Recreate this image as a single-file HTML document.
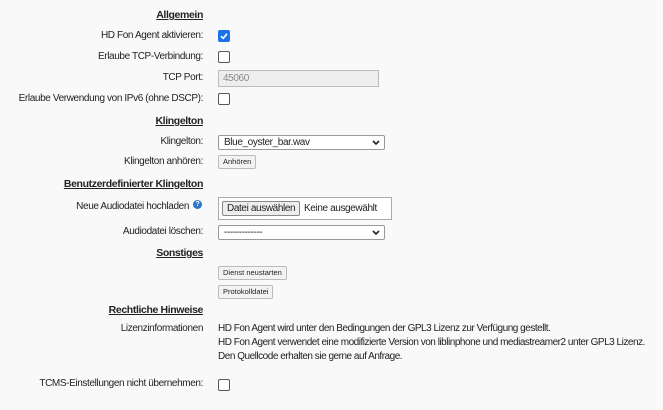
<!DOCTYPE html>
<html><head><meta charset="utf-8"><style>
body{margin:0;width:663px;height:410px;background:#f9f9f9;font-family:"Liberation Sans",sans-serif;font-size:10px;letter-spacing:-0.38px;color:#222;position:relative;overflow:hidden}
.l{position:absolute;right:460px;white-space:nowrap;line-height:12px}
.h{font-weight:bold;text-decoration:underline;font-size:10.5px}
.a{position:absolute;left:218px}
.cb{width:10px;height:10px;border:1px solid #555;border-radius:2px;background:#fff}
.cbon{background:#1a73e8;border-color:#1a73e8}
.inp{border:1px solid #bbb;background:#eee;color:#888;height:17px;line-height:15px;padding-left:4px;box-sizing:border-box}
.sel{border:1px solid #999;background:#fff;height:15px;line-height:13px;padding-left:5px;box-sizing:border-box;border-radius:2px}
.btn{border:1px solid #bbb;border-radius:2px;background:#f3f3f3;font-size:7.5px;letter-spacing:0;height:14px;line-height:12px;padding:0 4px;box-sizing:border-box}
.t{position:absolute;left:218px;line-height:14px;white-space:nowrap;letter-spacing:-0.48px}
.ch{position:absolute;right:4px;top:4px}
</style></head><body>
<div class="l h" style="top:9px">Allgemein</div>
<div class="l" style="top:30px">HD Fon Agent aktivieren:</div>
<div class="a cb cbon" style="top:30px"><svg width="10" height="10" style="position:absolute;left:0;top:0"><path d="M2 5.2L4.2 7.3L8 2.8" stroke="#fff" stroke-width="1.6" fill="none"/></svg></div>
<div class="l" style="top:51px">Erlaube TCP-Verbindung:</div>
<div class="a cb" style="top:51px"></div>
<div class="l" style="top:72px">TCP Port:</div>
<div class="a inp" style="top:70px;width:161px">45060</div>
<div class="l" style="top:93px">Erlaube Verwendung von IPv6 (ohne DSCP):</div>
<div class="a cb" style="top:93px"></div>
<div class="l h" style="top:115px">Klingelton</div>
<div class="l" style="top:136px">Klingelton:</div>
<div class="a sel" style="top:135px;width:167px">Blue_oyster_bar.wav<svg class="ch" width="8" height="5"><path d="M1 1L4 4L7 1" stroke="#222" stroke-width="1.6" fill="none"/></svg></div>
<div class="l" style="top:156px">Klingelton anhören:</div>
<div class="a btn" style="top:155px">Anhören</div>
<div class="l h" style="top:178px">Benutzerdefinierter Klingelton</div>
<div class="l" style="top:201px;right:474px">Neue Audiodatei hochladen</div>
<div style="position:absolute;left:193px;top:200px;width:9px;height:9px;border-radius:50%;background:#2a75c9;color:#fff;font-size:7px;line-height:9px;text-align:center;font-weight:bold">?</div>
<div class="a" style="top:197px;width:174px;height:23px;border:1px solid #aaa;background:#fff;box-sizing:border-box">
<span style="position:absolute;left:3px;top:3px;height:15px;line-height:13px;border:1px solid #888;background:#eee;border-radius:2px;padding:0 4px;box-sizing:border-box;font-size:10px;white-space:nowrap">Datei auswählen</span>
<span style="position:absolute;left:85px;top:4px;line-height:13px;white-space:nowrap">Keine ausgewählt</span></div>
<div class="l" style="top:226px">Audiodatei löschen:</div>
<div class="a sel" style="top:225px;width:167px">-------------<svg class="ch" width="8" height="5"><path d="M1 1L4 4L7 1" stroke="#222" stroke-width="1.6" fill="none"/></svg></div>
<div class="l h" style="top:247px">Sonstiges</div>
<div class="a btn" style="top:266px">Dienst neustarten</div>
<div class="a btn" style="top:285px">Protokolldatei</div>
<div class="l h" style="top:304px">Rechtliche Hinweise</div>
<div class="l" style="top:323px">Lizenzinformationen</div>
<div class="t" style="top:322px">HD Fon Agent wird unter den Bedingungen der GPL3 Lizenz zur Verfügung gestellt.<br>HD Fon Agent verwendet eine modifizierte Version von liblinphone und mediastreamer2 unter GPL3 Lizenz.<br>Den Quellcode erhalten sie gerne auf Anfrage.</div>
<div class="l" style="top:378px">TCMS-Einstellungen nicht übernehmen:</div>
<div class="a cb" style="top:379px"></div>
</body></html>
